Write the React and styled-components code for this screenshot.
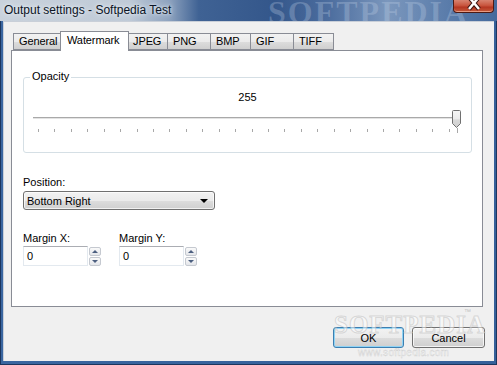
import React from "react"
import styled, { createGlobalStyle } from "styled-components"

const GlobalStyle = createGlobalStyle`
  html, body {
    margin: 0;
    padding: 0;
    overflow: hidden;
    background: #2f5a8f;
  }
  * {
    box-sizing: border-box;
  }
`

const ui = `"Liberation Sans", Arial, sans-serif`

const Window = styled.div`
  position: relative;
  width: 497px;
  height: 365px;
  display: flex;
  flex-direction: column;
  background: linear-gradient(to right, #3a66a0, #35609a);
  box-shadow: inset 1px 0 0 #1c365e, inset -1px 0 0 #1c365e, inset 0 -1px 0 #1c365e;
  overflow: hidden;
  font-family: ${ui};
  font-size: 11px;
  color: #000;
`

const TitleBar = styled.div`
  position: relative;
  height: 21px;
  flex: none;
  display: flex;
  align-items: flex-start;
  background: linear-gradient(
    to right,
    #c9d2dc 0%,
    #bfcad7 26%,
    #8ea3bf 34%,
    #3f6294 40%,
    #34578b 55%,
    #4c6d9e 66%,
    #7b97bd 78%,
    #5f80ad 88%,
    #44699c 100%
  );
  overflow: hidden;
`

const Title = styled.span`
  padding: 3px 0 0 4px;
  font-size: 12px;
  color: #0b1424;
  text-shadow: 0 0 6px #e8eef5, 0 0 3px #e8eef5;
  white-space: nowrap;
  z-index: 1;
`

const CloseButton = styled.div`
  margin-left: auto;
  margin-right: 3px;
  width: 41px;
  height: 13px;
  border: 1px solid #4d1a14;
  border-top: none;
  border-radius: 0 0 4px 4px;
  background: linear-gradient(to bottom, #d88370 0%, #c9563f 45%, #b53722 60%, #c45a3c 100%);
  box-shadow: inset 0 -1px 0 rgba(255, 200, 180, 0.6);
  display: flex;
  justify-content: center;
  z-index: 1;
`

const TitleMark = styled.span`
  position: absolute;
  left: 268px;
  top: -6px;
  font-family: "Liberation Serif", serif;
  font-weight: bold;
  font-size: 32px;
  letter-spacing: 2px;
  color: rgba(200, 215, 235, 0.28);
  white-space: nowrap;
`

const Client = styled.div`
  flex: 1;
  margin: 0 3px 4px 3px;
  background: #f0f0f0;
  box-shadow: inset 1px 0 0 #c9cfd8, inset 0 1px 0 #c9cfd8;
  display: flex;
  flex-direction: column;
  padding: 10px 9px 0 8px;
`

const TabRow = styled.div`
  display: flex;
  align-items: flex-end;
  height: 19px;
  padding-left: 2px;
  position: relative;
  z-index: 1;
`

const Tab = styled.div`
  width: ${p => (p.active ? p.w + 2 : p.w)}px;
  height: ${p => (p.active ? "20px" : "17px")};
  padding: ${p => (p.active ? "2px 0 0 6px" : "1px 0 0 5px")};
  margin: ${p => (p.active ? "0 -1px -1px -1px" : "0")};
  border: 1px solid #898c95;
  border-bottom: ${p => (p.active ? "none" : "1px solid #898c95")};
  border-left: ${p => (p.first || p.active ? "1px solid #898c95" : "none")};
  background: ${p =>
    p.active ? "#ffffff" : "linear-gradient(to bottom, #f2f2f2 0%, #ebebeb 50%, #dddddd 51%, #cfcfcf 100%)"};
  white-space: nowrap;
  letter-spacing: -0.1px;
  position: relative;
  z-index: ${p => (p.active ? 2 : 1)};
`

const Panel = styled.div`
  height: 257px;
  margin-right: 2px;
  background: #fff;
  border: 1px solid #898c95;
  padding: 26px 10px 0 11px;
  display: flex;
  flex-direction: column;
`

const GroupBox = styled.div`
  position: relative;
  height: 76px;
  border: 1px solid #d5dfe5;
  border-radius: 3px;
  display: flex;
  flex-direction: column;
  align-items: stretch;
  padding: 13px 9px 0 9px;
`

const Legend = styled.span`
  position: absolute;
  left: 6px;
  top: -8px;
  padding: 0 2px;
  background: #fff;
  line-height: 13px;
`

const Value = styled.div`
  text-align: center;
  line-height: 13px;
  height: 13px;
`

const Slider = styled.div`
  position: relative;
  height: 26px;
  margin-top: 6px;
`

const Track = styled.div`
  position: absolute;
  left: 0;
  right: 5px;
  top: 7px;
  height: 2px;
  border-top: 1px solid #a9a9a9;
  border-bottom: 1px solid #e3e3e3;
`

const Thumb = styled.svg`
  position: absolute;
  right: 0;
  top: 0;
`

const Ticks = styled.svg`
  position: absolute;
  left: 0;
  top: 18px;
`

const Label = styled.div`
  line-height: 13px;
  height: 13px;
  margin-top: ${p => p.gap || 0}px;
`

const Select = styled.div`
  width: 192px;
  height: 19px;
  margin-top: 2px;
  border: 1px solid #707070;
  border-radius: 3px;
  background: linear-gradient(to bottom, #f2f2f2 0%, #ebebeb 50%, #dddddd 51%, #cfcfcf 100%);
  box-shadow: inset 0 0 0 1px rgba(255, 255, 255, 0.7);
  display: flex;
  align-items: center;
  padding: 0 6px 0 3px;
  justify-content: space-between;
`

const Arrow = styled.span`
  width: 0;
  height: 0;
  border-left: 4px solid transparent;
  border-right: 4px solid transparent;
  border-top: 4px solid #000;
`

const FieldRow = styled.div`
  display: flex;
  gap: 18px;
  margin-top: 22px;
`

const Field = styled.div`
  display: flex;
  flex-direction: column;
`

const SpinRow = styled.div`
  display: flex;
  gap: 1px;
  margin-top: 1px;
`

const Input = styled.div`
  width: 65px;
  height: 20px;
  border: 1px solid #e3e9ef;
  border-top-color: #abadb3;
  background: #fff;
  padding: 3px 0 0 3px;
  line-height: 13px;
`

const Spinner = styled.div`
  display: flex;
  flex-direction: column;
  gap: 1px;
  padding-top: 1px;
`

const SpinButton = styled.div`
  width: 12px;
  height: 9px;
  border: 1px solid #c5c9d0;
  border-radius: 2px;
  background: linear-gradient(to bottom, #fafafa, #e4e6ea);
  display: flex;
  align-items: center;
  justify-content: center;

  &::after {
    content: "";
    width: 0;
    height: 0;
    border-left: 3px solid transparent;
    border-right: 3px solid transparent;
    ${p => (p.down ? "border-top: 3px solid #4c5f80;" : "border-bottom: 3px solid #4c5f80;")}
  }
`

const Footer = styled.div`
  display: flex;
  justify-content: flex-end;
  gap: 8px;
  margin-top: 20px;
`

const Button = styled.div`
  width: ${p => p.w}px;
  height: 21px;
  border: 1px solid ${p => (p.primary ? "#3c7fb1" : "#707070")};
  border-radius: 3px;
  background: linear-gradient(to bottom, #f2f2f2 0%, #ebebeb 50%, #dddddd 51%, #cfcfcf 100%);
  box-shadow: inset 0 0 0 1px ${p => (p.primary ? "#8fd3f5" : "rgba(255,255,255,0.75)")};
  display: flex;
  align-items: center;
  justify-content: center;
  padding-top: 1px;
`

const Mark = styled.span`
  position: absolute;
  left: 334px;
  top: 311px;
  font-family: "Liberation Serif", serif;
  font-weight: bold;
  font-size: 25px;
  letter-spacing: 1px;
  color: rgba(255, 255, 255, 0.5);
  -webkit-text-stroke: 1px rgba(170, 170, 170, 0.4);
  white-space: nowrap;
  pointer-events: none;
`

const TradeMark = styled.span`
  position: absolute;
  left: 464px;
  top: 308px;
  font-size: 7px;
  color: rgba(170, 170, 170, 0.7);
`

const Url = styled.span`
  position: absolute;
  left: 358px;
  top: 347px;
  font-size: 10px;
  letter-spacing: 0.3px;
  color: rgba(255, 255, 255, 0.6);
  -webkit-text-stroke: 0.4px rgba(170, 170, 170, 0.5);
  pointer-events: none;
`

const tabs = [
  { name: "General", w: 48 },
  { name: "Watermark", w: 67 },
  { name: "JPEG", w: 40 },
  { name: "PNG", w: 43 },
  { name: "BMP", w: 40 },
  { name: "GIF", w: 43 },
  { name: "TIFF", w: 40 },
]

function TickMarks() {
  const xs = []
  for (let i = 0; i <= 25; i++) xs.push(5 + (i * 419) / 25.5)
  return (
    <Ticks width="429" height="6">
      {xs.map((x, i) => (
        <rect key={i} x={Math.round(x)} y="1" width="1" height="3" fill="#a8a8a8" />
      ))}
      <rect x="424" y="0" width="1" height="5" fill="#a8a8a8" />
    </Ticks>
  )
}

export default function App() {
  return (
    <>
      <GlobalStyle />
      <Window>
        <TitleBar>
          <Title>Output settings - Softpedia Test</Title>
          <TitleMark>SOFTPEDIA</TitleMark>
          <CloseButton>
            <svg width="14" height="11" viewBox="0 0 14 11">
              <path d="M2 -3 L12 9 M12 -3 L2 9" stroke="#3a1410" strokeWidth="4.5" />
              <path d="M2 -3 L12 9 M12 -3 L2 9" stroke="#ffffff" strokeWidth="2.5" />
            </svg>
          </CloseButton>
        </TitleBar>
        <Client>
          <TabRow>
            {tabs.map((t, i) => (
              <Tab key={t.name} w={t.w} first={i === 0} active={t.name === "Watermark"}>
                {t.name}
              </Tab>
            ))}
          </TabRow>
          <Panel>
            <GroupBox>
              <Legend>Opacity</Legend>
              <Value>255</Value>
              <Slider>
                <Track />
                <TickMarks />
                <Thumb width="11" height="19" viewBox="0 0 11 19">
                  <defs>
                    <linearGradient id="thumb" x1="0" y1="0" x2="0" y2="1">
                      <stop offset="0" stopColor="#f6f6f6" />
                      <stop offset="0.5" stopColor="#ececec" />
                      <stop offset="0.55" stopColor="#d8d8d8" />
                      <stop offset="1" stopColor="#cfcfcf" />
                    </linearGradient>
                  </defs>
                  <path
                    d="M1.5 1.5 Q1.5 0.5 2.5 0.5 L8.5 0.5 Q9.5 0.5 9.5 1.5 L9.5 13.5 L5.5 17.5 L1.5 13.5 Z"
                    fill="url(#thumb)"
                    stroke="#707070"
                  />
                </Thumb>
              </Slider>
            </GroupBox>
            <Label gap={23}>Position:</Label>
            <Select>
              <span>Bottom Right</span>
              <Arrow />
            </Select>
            <FieldRow>
              <Field>
                <Label>Margin X:</Label>
                <SpinRow>
                  <Input>0</Input>
                  <Spinner>
                    <SpinButton />
                    <SpinButton down />
                  </Spinner>
                </SpinRow>
              </Field>
              <Field>
                <Label>Margin Y:</Label>
                <SpinRow>
                  <Input>0</Input>
                  <Spinner>
                    <SpinButton />
                    <SpinButton down />
                  </Spinner>
                </SpinRow>
              </Field>
            </FieldRow>
          </Panel>
          <Footer>
            <Button primary w={71}>OK</Button>
            <Button w={73}>Cancel</Button>
          </Footer>
        </Client>
        <Mark>SOFTPEDIA</Mark>
        <TradeMark>™</TradeMark>
        <Url>www.softpedia.com</Url>
      </Window>
    </>
  )
}
